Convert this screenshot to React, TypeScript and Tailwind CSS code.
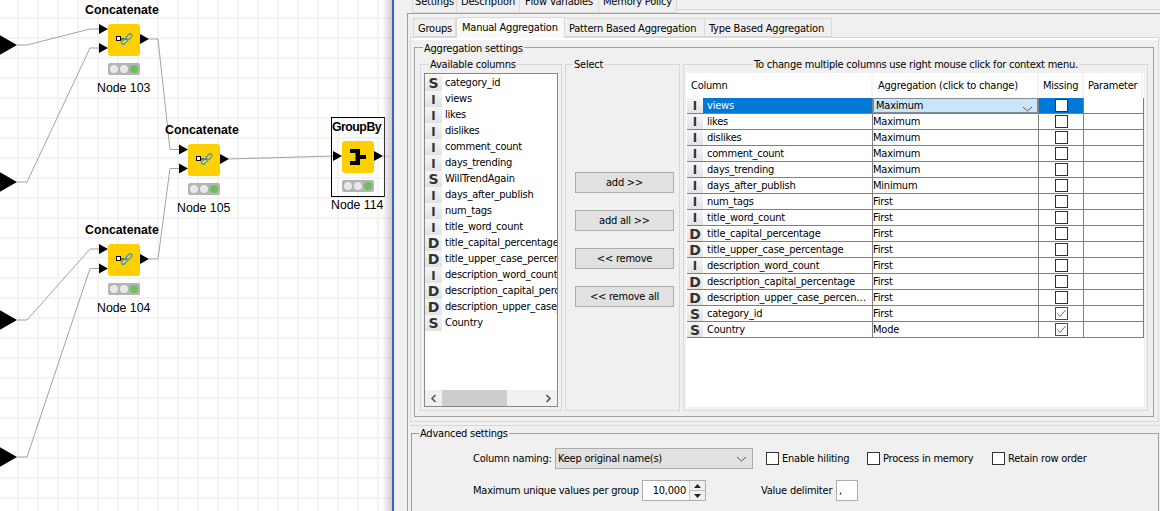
import React from "react";

const FONT = "[font-family:'DejaVu_Sans_Condensed','DejaVu_Sans',sans-serif] [font-stretch:condensed] tracking-[-0.22px]";

type T = "S" | "I" | "D";

function TypeIcon({ t, w = "w-[17px]" }: { t: T; w?: string }) {
  return (
    <span
      className={`${w} h-full shrink-0 flex items-center justify-center bg-gradient-to-b from-[#f6f6f6] to-[#e2e2e2] text-[#333] font-bold leading-none tracking-normal [font-family:'DejaVu_Sans',sans-serif] ${
        t === "I" ? "text-[13px] [font-stretch:condensed]" : "text-[14px] [font-stretch:normal]"
      }`}
    >
      {t}
    </span>
  );
}

function Group({
  title,
  className,
  titleClass = "left-[8px] -top-[7px]",
  children,
}: {
  title: string;
  className: string;
  titleClass?: string;
  children?: React.ReactNode;
}) {
  return (
    <div className={`relative ${className}`}>
      <span className={`absolute ${titleClass} bg-[#f0f0f0] px-[1px] leading-[14px] whitespace-nowrap`}>{title}</span>
      {children}
    </div>
  );
}

function Chevron({ className = "" }: { className?: string }) {
  return (
    <svg width="11" height="6" viewBox="0 0 11 6" className={className}>
      <path d="M1 1 L5.5 5 L10 1" fill="none" stroke="#555" strokeWidth="1" />
    </svg>
  );
}

function CheckBox({ checked = false }: { checked?: boolean }) {
  return (
    <span className={`w-[13px] h-[13px] shrink-0 bg-white border flex items-center justify-center ${checked ? "border-[#4a4a4a]" : "border-[#333]"}`}>
      {checked && (
        <svg width="11" height="11" viewBox="0 0 11 11">
          <path d="M1.5 5.5 L4 8.5 L9.5 2" fill="none" stroke="#666" strokeWidth="1" />
        </svg>
      )}
    </span>
  );
}

const avail: [T, string][] = [
  ["S", "category_id"],
  ["I", "views"],
  ["I", "likes"],
  ["I", "dislikes"],
  ["I", "comment_count"],
  ["I", "days_trending"],
  ["S", "WillTrendAgain"],
  ["I", "days_after_publish"],
  ["I", "num_tags"],
  ["I", "title_word_count"],
  ["D", "title_capital_percentage"],
  ["D", "title_upper_case_percentage"],
  ["I", "description_word_count"],
  ["D", "description_capital_percentage"],
  ["D", "description_upper_case_percentage"],
  ["S", "Country"],
];

const rows: [T, string, string, boolean][] = [
  ["I", "views", "Maximum", false],
  ["I", "likes", "Maximum", false],
  ["I", "dislikes", "Maximum", false],
  ["I", "comment_count", "Maximum", false],
  ["I", "days_trending", "Maximum", false],
  ["I", "days_after_publish", "Minimum", false],
  ["I", "num_tags", "First", false],
  ["I", "title_word_count", "First", false],
  ["D", "title_capital_percentage", "First", false],
  ["D", "title_upper_case_percentage", "First", false],
  ["I", "description_word_count", "First", false],
  ["D", "description_capital_percentage", "First", false],
  ["D", "description_upper_case_percen…", "First", false],
  ["S", "category_id", "First", true],
  ["S", "Country", "Mode", true],
];

function ConcatIcon() {
  return (
    <svg width="32" height="32" viewBox="0 0 32 32">
      <path d="M12 15 H18" stroke="#000" strokeWidth="1" />
      <rect x="8.5" y="12.5" width="4" height="4" fill="#fff" stroke="#000" strokeWidth="1" />
      <g fill="none" stroke="#3f9bd6" strokeWidth="1.3">
        <rect x="13" y="15.5" width="7" height="3.6" rx="1.8" transform="rotate(-45 16.5 17.3)" />
        <rect x="17.5" y="11" width="7" height="3.6" rx="1.8" transform="rotate(-45 21 12.8)" />
      </g>
    </svg>
  );
}

function GroupByIcon() {
  return (
    <svg width="32" height="32" viewBox="0 0 32 32">
      <path d="M8 8 H18 V14 H24 V18 H18 V24 H8 V20 H13.5 V12 H8 Z" fill="#000" />
    </svg>
  );
}

function Tri({ x, y }: { x: number; y: number }) {
  return <polygon points={`${x},${y - 5} ${x + 9},${y} ${x},${y + 5}`} fill="#000" />;
}

function Node({
  x,
  y,
  title,
  titleX,
  titleY,
  titleClass = "tracking-normal",
  label,
  labelX,
  labelY,
  statusY,
  children,
}: {
  x: number;
  y: number;
  title: string;
  titleX: number;
  titleY: number;
  titleClass?: string;
  label: string;
  labelX: number;
  labelY: number;
  statusY: number;
  children: React.ReactNode;
}) {
  return (
    <>
      <span
        className={`absolute font-bold text-[12.3px] leading-[14px] whitespace-nowrap text-black [font-stretch:normal] [font-family:'Liberation_Sans',sans-serif] ${titleClass}`}
        style={{ left: titleX, top: titleY - 6 }}
      >
        {title}
      </span>
      <div className="absolute w-8 h-8 rounded-[3px] bg-[#ffd000]" style={{ left: x, top: y }}>
        {children}
      </div>
      <div
        className="absolute w-8 h-3 rounded-[2px] bg-[#b4b4b4] flex items-center justify-center gap-[2px]"
        style={{ left: x, top: statusY }}
      >
        <span className="w-2 h-2 rounded-full bg-[#e8e8e8]" />
        <span className="w-2 h-2 rounded-full bg-[#e8e8e8]" />
        <span className="w-2 h-2 rounded-full bg-[#6cbf5b]" />
      </div>
      <span
        className="absolute text-[12.3px] leading-[14px] whitespace-nowrap text-black tracking-normal [font-stretch:normal] [font-family:'Liberation_Sans',sans-serif]"
        style={{ left: labelX, top: labelY - 6 }}
      >
        {label}
      </span>
    </>
  );
}

function Canvas() {
  const wires = [
    "M17 45 H27 L90 29 H99",
    "M17 182 H27 L90 48 H99",
    "M149 39 H158 L170 149.5 H179",
    "M17 320 H27 L90 249 H99",
    "M17 457 H27 L90 268.5 H99",
    "M149 259 H158 L170 168.5 H179",
    "M229 159 L333 156",
    "M383 156 H392",
  ];
  return (
    <div className="relative w-[392px] h-[511px] shrink-0 overflow-hidden bg-white bg-[linear-gradient(#f3f3f3_2px,transparent_2px),linear-gradient(90deg,#f3f3f3_2px,transparent_2px)] bg-[size:20px_20px] bg-[position:17px_17px]">
      <svg className="absolute left-0 top-0" width="392" height="511" viewBox="0 0 392 511">
        {wires.map((d) => (
          <path key={d} d={d} fill="none" stroke="#a3a3a3" strokeWidth="1" />
        ))}
        {[45, 182, 320, 457].map((y) => (
          <polygon key={y} points={`-2,${y - 11} 17,${y} -2,${y + 11}`} fill="#000" />
        ))}
        <Tri x={99} y={29} />
        <Tri x={99} y={48} />
        <Tri x={140} y={39} />
        <Tri x={179} y={149.5} />
        <Tri x={179} y={168.5} />
        <Tri x={220} y={159} />
        <Tri x={99} y={249} />
        <Tri x={99} y={268.5} />
        <Tri x={140} y={259} />
        <Tri x={333} y={156} />
        <Tri x={374} y={156} />
      </svg>
      <div className="absolute left-[331px] top-[117px] w-[54px] h-[80px] border border-black" />
      <Node x={108} y={24} title="Concatenate" titleX={85} titleY={9} label="Node 103" labelX={97} labelY={87} statusY={63}>
        <ConcatIcon />
      </Node>
      <Node x={188} y={144} title="Concatenate" titleX={165} titleY={129} label="Node 105" labelX={177} labelY={207} statusY={183}>
        <ConcatIcon />
      </Node>
      <Node x={108} y={244} title="Concatenate" titleX={85} titleY={229} label="Node 104" labelX={97} labelY={307} statusY={283}>
        <ConcatIcon />
      </Node>
      <Node x={342} y={141} title="GroupBy" titleX={332} titleY={126} titleClass="tracking-[-0.5px]" label="Node 114" labelX={331} labelY={204} statusY={180}>
        <GroupByIcon />
      </Node>
      <div className="absolute right-0 top-0 h-full w-[10px] bg-gradient-to-r from-transparent to-[#cdcdcd]" />
    </div>
  );
}

function TopTab({ label, w }: { label: string; w: string }) {
  return (
    <div className={`${w} h-[22px] shrink-0 flex items-center justify-center border border-[#d9d9d9] border-l-0 first:border-l whitespace-nowrap`}>{label}</div>
  );
}

function InnerTab({ label, w, active = false }: { label: string; w: string; active?: boolean }) {
  return active ? (
    <div className={`${w} h-[21px] -mb-px relative z-10 shrink-0 pl-[5px] pb-[1px] flex items-center bg-[#f9f9f9] border border-b-0 border-[#d9d9d9] whitespace-nowrap`}>{label}</div>
  ) : (
    <div className={`${w} h-[19px] shrink-0 pl-[4px] pt-[2px] flex items-center border border-l-0 first:border-l border-[#d9d9d9] whitespace-nowrap`}>{label}</div>
  );
}

function ActionButton({ label }: { label: string }) {
  return (
    <button className="w-[99px] h-[21px] bg-[#e1e1e1] border border-[#adadad] flex items-center justify-center leading-none">
      {label}
    </button>
  );
}

function AvailableList() {
  return (
    <div className="w-[134px] h-[334px] bg-white border border-[#828790] flex flex-col overflow-hidden">
      <div className="flex-1 min-h-0 pt-px flex flex-col">
        {avail.map(([t, n]) => (
          <div key={n} className="h-4 shrink-0 flex items-center overflow-hidden">
            <TypeIcon t={t} />
            <span className="ml-[3px] whitespace-nowrap">{n}</span>
          </div>
        ))}
      </div>
      <div className="h-[16px] shrink-0 bg-[#f0f0f0] flex items-center">
        <span className="w-[17px] h-full shrink-0 flex items-center justify-center">
          <svg width="7" height="9" viewBox="0 0 7 9"><path d="M5.5 1 L2 4.5 L5.5 8" fill="none" stroke="#555" strokeWidth="1.6" /></svg>
        </span>
        <span className="w-[65px] h-full bg-[#cdcdcd]" />
        <span className="flex-1" />
        <span className="w-[17px] h-full shrink-0 flex items-center justify-center">
          <svg width="7" height="9" viewBox="0 0 7 9"><path d="M1.5 1 L5 4.5 L1.5 8" fill="none" stroke="#555" strokeWidth="1.6" /></svg>
        </span>
      </div>
    </div>
  );
}

function AggregationTable() {
  return (
    <div className="w-[458px] h-[334px] bg-white pl-px">
      <div className="h-[25px] pt-px flex items-center">
        <div className="w-[186px] h-full pl-[4px] flex items-center border-r-2 border-[#f4f4f4]">Column</div>
        <div className="w-[166px] h-full pl-[5px] flex items-center border-r-2 border-[#f4f4f4]">Aggregation (click to change)</div>
        <div className="w-[45px] h-full pl-[4px] flex items-center border-r-2 border-[#f4f4f4]">Missing</div>
        <div className="w-[59px] h-full pl-[4px] flex items-center border-r-2 border-[#f4f4f4]">Parameter</div>
      </div>
      {rows.map(([t, n, a, c], i) => (
        <div key={n} className="h-4 flex border-b border-[#808080]">
          <div className="w-[186px] h-full flex items-center border-r border-[#808080]">
            <TypeIcon t={t} w="w-[16px]" />
            <span className={`flex-1 h-full pl-[4px] flex items-center whitespace-nowrap overflow-hidden ${i === 0 ? "bg-[#0078d7] text-white" : ""}`}>{n}</span>
          </div>
          <div className="w-[166px] h-full border-r border-[#808080] flex items-center">
            {i === 0 ? (
              <div className="w-full h-full bg-[#cce4f7] border border-[#7f8c99] pl-[2px] flex items-center justify-between pr-[4px]">
                <span>{a}</span>
                <Chevron className="mt-[6px]" />
              </div>
            ) : (
              <span>{a}</span>
            )}
          </div>
          <div className={`w-[45px] h-full border-r border-[#808080] flex items-center justify-center ${i === 0 ? "bg-[#0078d7]" : ""}`}>
            <CheckBox checked={c} />
          </div>
          <div className="w-[60px] h-full border-r border-[#808080]" />
        </div>
      ))}
    </div>
  );
}

function LabeledCheck({ label, w }: { label: string; w: string }) {
  return (
    <div className={`${w} shrink-0 flex items-center gap-[3px] whitespace-nowrap`}>
      <CheckBox />
      <span>{label}</span>
    </div>
  );
}

function Dialog() {
  return (
    <div className="w-[768px] h-[511px] overflow-hidden bg-[#f0f0f0] border-l-2 border-[#3a5fcd] flex flex-col">
      <div className="h-[13px] shrink-0 overflow-hidden pl-[18px] flex items-end">
        <TopTab label="Settings" w="w-[45px]" />
        <TopTab label="Description" w="w-[63px]" />
        <TopTab label="Flow Variables" w="w-[79px]" />
        <TopTab label="Memory Policy" w="w-[78px]" />
        <div className="flex-1 self-start h-[10px] border-b border-[#d9d9d9]" />
      </div>
      <div className="ml-[13px] flex-1 min-h-0 border-t border-l border-[#a0a0a0] flex flex-col">
        <div className="h-[23px] shrink-0 pl-[5px] flex items-end">
          <InnerTab label="Groups" w="w-[43px]" />
          <InnerTab label="Manual Aggregation" w="w-[109px]" active />
          <InnerTab label="Pattern Based Aggregation" w="w-[140px]" />
          <InnerTab label="Type Based Aggregation" w="w-[127px]" />
        </div>
        <div className="ml-[2px] w-[749px] h-[385px] shrink-0 border border-[#d9d9d9]">
          <div className="h-full border-t-2 border-white pt-[7px] pl-[3px]">
            <Group
              title="Aggregation settings"
              titleClass="left-[8px] -top-[6px]"
              className="w-[740px] h-[370px] border border-[#a0a0a0] pt-[16px] pl-[5px]"
            >
              <div className="flex gap-[3px]">
                <Group title="Available columns" className="w-[142px] h-[347px] border border-[#d9d9d9] pt-2 pl-[3px]">
                  <AvailableList />
                </Group>
                <Group
                  title="Select"
                  titleClass="left-[7px] -top-[7px]"
                  className="w-[115px] h-[347px] border border-[#d9d9d9] pt-[107px] pl-[9px]"
                >
                  <div className="flex flex-col gap-[17px]">
                    <ActionButton label="add >>" />
                    <ActionButton label="add all >>" />
                    <ActionButton label="<< remove" />
                    <ActionButton label="<< remove all" />
                  </div>
                </Group>
                <Group
                  title="To change multiple columns use right mouse click for context menu."
                  titleClass="left-[69px] -top-[7px]"
                  className="w-[465px] h-[347px] border border-[#d9d9d9] pt-2 pl-[2px]"
                >
                  <AggregationTable />
                </Group>
              </div>
            </Group>
          </div>
        </div>
        <div className="ml-[2px] mt-[3px] h-px shrink-0 bg-[#d9d9d9]" />
        <Group
          title="Advanced settings"
          titleClass="left-[7px] -top-[7px]"
          className="ml-[3px] mt-[7px] w-[748px] h-[100px] shrink-0 border border-[#a0a0a0] pt-[14px] pl-[61px]"
        >
          <div className="flex items-center h-[21px]">
            <span className="w-[82px] shrink-0 whitespace-nowrap">Column naming:</span>
            <div className="w-[198px] h-[21px] shrink-0 bg-[#e1e1e1] border border-[#adadad] pl-[2px] pr-[5px] flex items-center justify-between">
              <span>Keep original name(s)</span>
              <Chevron />
            </div>
            <div className="w-[13px] shrink-0" />
            <LabeledCheck label="Enable hiliting" w="w-[101px]" />
            <LabeledCheck label="Process in memory" w="w-[125px]" />
            <LabeledCheck label="Retain row order" w="w-[110px]" />
          </div>
          <div className="flex items-center h-[21px] mt-[11px]">
            <span className="w-[169px] shrink-0 whitespace-nowrap">Maximum unique values per group</span>
            <div className="w-[64px] h-[21px] shrink-0 bg-white border border-[#adadad] flex items-center">
              <span className="flex-1 text-right pr-[3px]">10,000</span>
              <div className="w-[16px] h-full shrink-0 flex flex-col bg-[#f0f0f0] border-l border-[#d0d0d0]">
                <div className="flex-1 flex items-center justify-center border-b border-[#bbb]">
                  <svg width="7" height="4" viewBox="0 0 7 4"><path d="M0 4 L3.5 0 L7 4 Z" fill="#222" /></svg>
                </div>
                <div className="flex-1 flex items-center justify-center">
                  <svg width="7" height="4" viewBox="0 0 7 4"><path d="M0 0 L3.5 4 L7 0 Z" fill="#222" /></svg>
                </div>
              </div>
            </div>
            <div className="w-[55px] shrink-0" />
            <span className="w-[75px] shrink-0 whitespace-nowrap">Value delimiter</span>
            <div className="w-[22px] h-[21px] shrink-0 bg-white border border-[#adadad] pl-[2px] flex items-center">,</div>
          </div>
        </Group>
      </div>
    </div>
  );
}

export default function App() {
  return (
    <div className={`w-[1160px] h-[511px] overflow-hidden flex text-[11px] leading-[14px] text-black ${FONT}`}>
      <Canvas />
      <Dialog />
    </div>
  );
}
